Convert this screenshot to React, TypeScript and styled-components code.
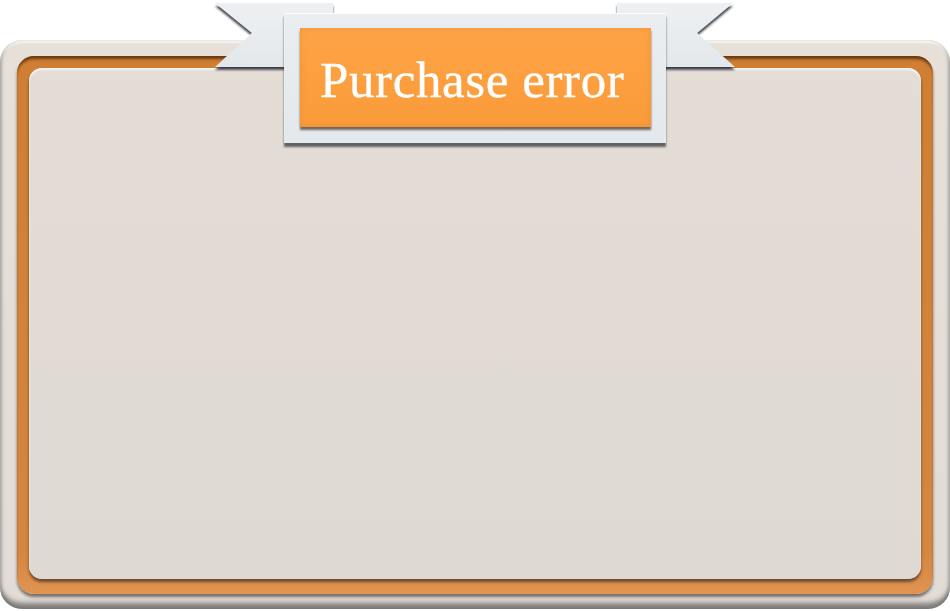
import React from "react";
import styled, { createGlobalStyle } from "styled-components";

const Global = createGlobalStyle`
  html, body { margin: 0; padding: 0; background: #ffffff; }
  body { width: 950px; height: 611px; overflow: hidden; }
`;

const Stage = styled.div`
  position: relative;
  width: 950px;
  height: 611px;
  padding-top: 40px;
  box-sizing: border-box;
`;

const OuterFrame = styled.div`
  box-sizing: border-box;
  width: 950px;
  height: 569px;
  padding: 16px 17px 15px 17px;
  border-radius: 22px;
  background: linear-gradient(#e6e0d8, #e2dcd6);
  box-shadow:
    inset 0 -7px 5px -1px rgba(60, 60, 60, 0.6),
    inset 3px 0 3px -1px rgba(90, 90, 90, 0.25),
    inset -3px 0 3px -1px rgba(90, 90, 90, 0.25),
    inset 0 3px 2px rgba(255, 255, 255, 0.7);
`;

const OrangeRing = styled.div`
  box-sizing: border-box;
  height: 100%;
  padding: 12px 12px 15px 12px;
  border-radius: 17px;
  background: linear-gradient(#cf7e33, #d58640 92%, #e09450);
  box-shadow:
    inset 0 4px 3px -1px rgba(70, 35, 5, 0.75),
    0 3px 3px rgba(40, 40, 40, 0.6);
`;

const Panel = styled.div`
  height: 100%;
  border-radius: 13px;
  background: linear-gradient(#e4ddd5, #dfd9d4);
  box-shadow:
    inset 0 2px 2px rgba(255, 255, 255, 0.75),
    0 3px 3px rgba(30, 30, 30, 0.6);
`;

const RibbonLayer = styled.div`
  position: absolute;
  top: 3px;
  left: 215px;
  width: 522px;
  height: 150px;
  padding: 10px 0 0 69px;
  box-sizing: border-box;
`;

const Tails = styled.svg`
  position: absolute;
  left: 0;
  top: 0;
  overflow: visible;
`;

const BannerFrame = styled.div`
  position: relative;
  box-sizing: border-box;
  width: 382px;
  height: 130px;
  padding: 15px 15px 16px 16px;
  background: linear-gradient(#eaeef0, #e3e8ec);
  box-shadow:
    0 4px 2px rgba(40, 45, 50, 0.7),
    inset 0 1px 1px rgba(255, 255, 255, 0.9);
`;

const BannerPlate = styled.div`
  height: 100%;
  display: flex;
  align-items: center;
  padding: 4px 0 0 20px;
  box-sizing: border-box;
  background: linear-gradient(#fda447, #fd9f3f 50%, #fa9b3b);
  box-shadow:
    0 3px 2px rgba(50, 35, 20, 0.65),
    inset 0 0 6px rgba(220, 120, 30, 0.35);
`;

const Title = styled.h1`
  margin: 0;
  font-family: "Liberation Serif", "DejaVu Serif", serif;
  font-weight: 400;
  font-size: 51px;
  letter-spacing: 0.6px;
  color: #ffffff;
  -webkit-text-stroke: 0.3px #ffffff;
`;

export default function App() {
  return (
    <>
      <Global />
      <Stage>
        <OuterFrame>
          <OrangeRing>
            <Panel />
          </OrangeRing>
        </OuterFrame>
        <RibbonLayer>
          <Tails width="522" height="70" viewBox="0 0 522 70">
            <defs>
              <linearGradient id="tailFill" x1="0" y1="0" x2="0" y2="1">
                <stop offset="0" stopColor="#eef1f3" />
                <stop offset="1" stopColor="#e2e7eb" />
              </linearGradient>
              <filter id="tailShadow" x="-10%" y="-10%" width="120%" height="130%">
                <feDropShadow dx="0" dy="3" stdDeviation="1.2" floodColor="#30363c" floodOpacity="0.9" />
              </filter>
            </defs>
            <polygon
              points="0,0 118,0 118,64 0,64 37,30"
              fill="url(#tailFill)"
              filter="url(#tailShadow)"
            />
            <polygon
              points="402,0 518,0 482,30 520,64 402,64"
              fill="url(#tailFill)"
              filter="url(#tailShadow)"
            />
          </Tails>
          <BannerFrame>
            <BannerPlate>
              <Title>Purchase error</Title>
            </BannerPlate>
          </BannerFrame>
        </RibbonLayer>
      </Stage>
    </>
  );
}
